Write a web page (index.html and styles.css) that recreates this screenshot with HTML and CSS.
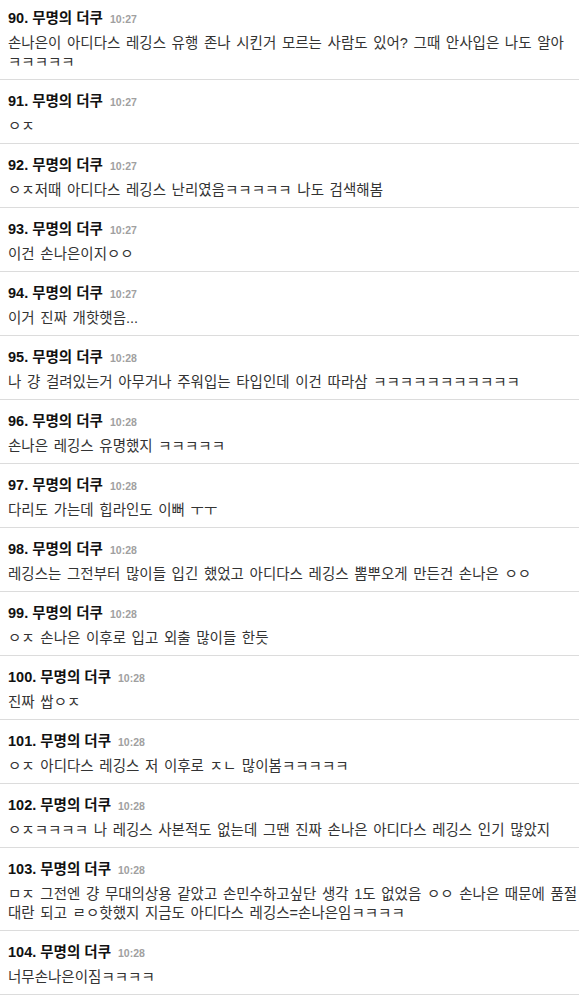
FILE: index.html
```html
<!DOCTYPE html>
<html lang="ko">
<head>
<meta charset="utf-8">
<link rel="stylesheet" href="styles.css">
</head>
<body>
<ul class="list">
  <li class="item"><div class="head">90. 무명의 더쿠 <span class="time">10:27</span></div><div class="body">손나은이 아디다스 레깅스 유행 존나 시킨거 모르는 사람도 있어? 그때 안사입은 나도 알아 ㅋㅋㅋㅋㅋ</div></li>
  <li class="item"><div class="head">91. 무명의 더쿠 <span class="time">10:27</span></div><div class="body">ㅇㅈ</div></li>
  <li class="item"><div class="head">92. 무명의 더쿠 <span class="time">10:27</span></div><div class="body">ㅇㅈ저때 아디다스 레깅스 난리였음ㅋㅋㅋㅋㅋ 나도 검색해봄</div></li>
  <li class="item"><div class="head">93. 무명의 더쿠 <span class="time">10:27</span></div><div class="body">이건 손나은이지ㅇㅇ</div></li>
  <li class="item"><div class="head">94. 무명의 더쿠 <span class="time">10:27</span></div><div class="body">이거 진짜 개핫햇음...</div></li>
  <li class="item"><div class="head">95. 무명의 더쿠 <span class="time">10:28</span></div><div class="body">나 걍 걸려있는거 아무거나 주워입는 타입인데 이건 따라삼 ㅋㅋㅋㅋㅋㅋㅋㅋㅋㅋㅋ</div></li>
  <li class="item"><div class="head">96. 무명의 더쿠 <span class="time">10:28</span></div><div class="body">손나은 레깅스 유명했지 ㅋㅋㅋㅋㅋ</div></li>
  <li class="item"><div class="head">97. 무명의 더쿠 <span class="time">10:28</span></div><div class="body">다리도 가는데 힙라인도 이뻐 ㅜㅜ</div></li>
  <li class="item"><div class="head">98. 무명의 더쿠 <span class="time">10:28</span></div><div class="body">레깅스는 그전부터 많이들 입긴 했었고 아디다스 레깅스 뽐뿌오게 만든건 손나은 ㅇㅇ</div></li>
  <li class="item"><div class="head">99. 무명의 더쿠 <span class="time">10:28</span></div><div class="body">ㅇㅈ 손나은 이후로 입고 외출 많이들 한듯</div></li>
  <li class="item"><div class="head">100. 무명의 더쿠 <span class="time">10:28</span></div><div class="body">진짜 쌉ㅇㅈ</div></li>
  <li class="item"><div class="head">101. 무명의 더쿠 <span class="time">10:28</span></div><div class="body">ㅇㅈ 아디다스 레깅스 저 이후로 ㅈㄴ 많이봄ㅋㅋㅋㅋㅋ</div></li>
  <li class="item"><div class="head">102. 무명의 더쿠 <span class="time">10:28</span></div><div class="body">ㅇㅈㅋㅋㅋㅋ 나 레깅스 사본적도 없는데 그땐 진짜 손나은 아디다스 레깅스 인기 많았지</div></li>
  <li class="item"><div class="head">103. 무명의 더쿠 <span class="time">10:28</span></div><div class="body">ㅁㅈ 그전엔 걍 무대의상용 같았고 손민수하고싶단 생각 1도 없었음 ㅇㅇ 손나은 때문에 품절대란 되고 ㄹㅇ핫했지 지금도 아디다스 레깅스=손나은임ㅋㅋㅋㅋ</div></li>
  <li class="item"><div class="head">104. 무명의 더쿠 <span class="time">10:28</span></div><div class="body">너무손나은이짐ㅋㅋㅋㅋ</div></li>
</ul>
</body>
</html>
```

FILE: styles.css
```css
html, body {
  margin: 0;
  padding: 0;
  background: #fff;
}
body {
  font-family: "Liberation Sans", "Noto Sans CJK KR", sans-serif;
  font-size: 14.5px;
}
.list {
  list-style: none;
  margin: -3px 0 0 0;
  padding: 0;
}
.item {
  padding: 9px 0 7px 8px;
  border-bottom: 1px solid #dcdcdc;
}
.head {
  font-weight: bold;
  color: #111;
  line-height: 24px;
  height: 24px;
}
.time {
  font-size: 10.5px;
  color: #a0a0a0;
  margin-left: 3px;
}
.body {
  margin-top: 4px;
  color: #333;
  line-height: 19px;
  word-spacing: 1.6px;
}
```
